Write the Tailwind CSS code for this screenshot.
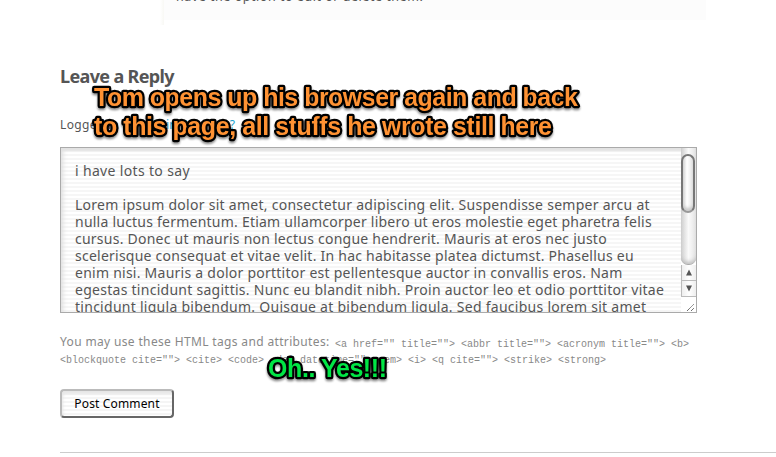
<!DOCTYPE html>
<html lang="en">
<head>
<meta charset="utf-8">
<title>Leave a Reply</title>
<script src="https://cdn.jsdelivr.net/npm/@tailwindcss/browser@4"></script>
</head>
<body class="relative h-[457px] w-[776px] overflow-hidden bg-white font-['Noto_Sans',sans-serif] text-[#555]">
<div class="flex h-[25px] pl-[160px]">
  <div class="w-1 bg-linear-to-r from-white to-[#f8f8f4]"></div>
  <div class="h-5 w-[542px] bg-[#fcfcfc] pl-3">
    <p class="-mt-[12px] w-max text-[12.5px] leading-[17px] tracking-[0.53px]">have the option to edit or delete them.</p>
  </div>
</div>
<main class="pl-[60px]">
  <h3 class="mt-[39px] w-max text-[18px] leading-6 font-bold tracking-[-0.65px]">Leave a Reply</h3>
  <p class="mt-[28px] w-max text-[12px] leading-[18px] tracking-[0.36px]">Logged in as <span class="text-[#1b9ecb]">admin</span>. <span class="text-[#1b9ecb]">Log out?</span></p>
  <div class="relative mt-[13px] flex h-[166px] w-[637px] overflow-hidden border border-[#aaa] bg-[repeating-linear-gradient(to_bottom,#fff_0px,#fff_2px,#f6f6f6_2px,#f6f6f6_4px)]">
    <div class="w-[620px] shrink-0 pt-[14px] pl-[14px] text-[14px] leading-[17px] whitespace-nowrap shadow-[inset_0_4px_2px_-1px_#e2e2e2,inset_5px_0_5px_-3px_#ddd]">
      <p class="w-max tracking-[0.34px]">i have lots to say</p>
      <p class="mt-[17px] w-max tracking-[0.27px]">Lorem ipsum dolor sit amet, consectetur adipiscing elit. Suspendisse semper arcu at</p>
      <p class="w-max tracking-[0.23px]">nulla luctus fermentum. Etiam ullamcorper libero ut eros molestie eget pharetra felis</p>
      <p class="w-max tracking-[0.24px]">cursus. Donec ut mauris non lectus congue hendrerit. Mauris at eros nec justo</p>
      <p class="w-max tracking-[0.24px]">scelerisque consequat et vitae velit. In hac habitasse platea dictumst. Phasellus eu</p>
      <p class="w-max tracking-[0.25px]">enim nisi. Mauris a dolor porttitor est pellentesque auctor in convallis eros. Nam</p>
      <p class="w-max tracking-[0.27px]">egestas tincidunt sagittis. Nunc eu blandit nibh. Proin auctor leo et odio porttitor vitae</p>
      <p class="w-max tracking-[0.27px]">tincidunt ligula bibendum. Quisque at bibendum ligula. Sed faucibus lorem sit amet</p>
    </div>
    <div class="flex w-[15px] shrink-0 flex-col bg-white">
      <div class="h-[117px] rounded-b-[7px] border-b border-[#aaa] bg-linear-to-r from-[#cfcfcf] via-[#fafafa] to-[#e4e4e4] pt-[6px] shadow-[inset_0_-4px_4px_-2px_#bbb]">
        <div class="h-[59px] w-[14px] rounded-full border-2 border-[#777] border-b-[#999] bg-linear-to-r from-[#d8d8d8] via-white via-40% to-[#e4e4e4] shadow-[inset_0_-3px_3px_#ccc]"></div>
      </div>
      <div class="flex h-[32px] w-[15px] flex-col border-b border-l border-[#bbb] bg-linear-to-r from-[#eee] via-white to-[#eee]">
        <svg class="h-[31px] w-[14px]" viewBox="0 0 14 31"><path d="M4 10.500L7 4.500L10 10.500Z M4 20.500L7 26.500L10 20.500Z" fill="#555"/><path d="M0 15.500H14" stroke="#bbb"/></svg>
      </div>
      <svg class="h-[15px] w-[15px]" viewBox="0 0 15 15"><path d="M6 14L13 7M10 14L13 11" stroke="#555" stroke-dasharray="1.2 .4" fill="none"/></svg>
    </div>
  </div>
  <div class="mt-[21px] text-[12px] leading-4 text-[#888] whitespace-nowrap">
    <p class="flex h-4"><span class="w-[275px] tracking-[0.35px]">You may use these HTML tags and attributes:</span><code class="pt-[3px] font-['Liberation_Mono',monospace] text-[10px]">&lt;a href="" title=""&gt; &lt;abbr title=""&gt; &lt;acronym title=""&gt; &lt;b&gt;</code></p>
    <p class="h-4"><code class="block pt-[3px] font-['Liberation_Mono',monospace] text-[10px]">&lt;blockquote cite=""&gt; &lt;cite&gt; &lt;code&gt; &lt;del datetime=""&gt; &lt;em&gt; &lt;i&gt; &lt;q cite=""&gt; &lt;strike&gt; &lt;strong&gt;</code></p>
  </div>
  <button class="mt-[23px] block h-[29px] w-[114px] rounded border-2 border-t-[#bbb] border-r-[#666] border-b-[#666] border-l-[#bbb] bg-[repeating-linear-gradient(to_bottom,#fff_0px,#fff_2px,#f5f5f5_2px,#f5f5f5_4px)] text-[12px] tracking-[0.15px] text-black shadow-[inset_1px_3px_3px_#e6e6e6]">Post Comment</button>
  <hr class="mt-[34px] border-[#ccc]">
</main>
<svg class="pointer-events-none absolute top-0 left-0 h-[457px] w-[776px] drop-shadow-[0_2px_1px_rgb(0_0_0/0.45)]" viewBox="0 0 776 457" font-family="Liberation Sans, sans-serif" font-size="25" font-weight="bold" stroke="#000" stroke-width="4.500" stroke-linejoin="round" paint-order="stroke">
  <g fill="#ff9233">
    <text x="94" y="106" textLength="484">Tom opens up his browser again and back</text>
    <text x="94" y="135" textLength="458">to this page, all stuffs he wrote still here</text>
  </g>
  <text x="268" y="377" textLength="119" fill="#00e645">Oh.. Yes!!!</text>
</svg>
</body>
</html>
